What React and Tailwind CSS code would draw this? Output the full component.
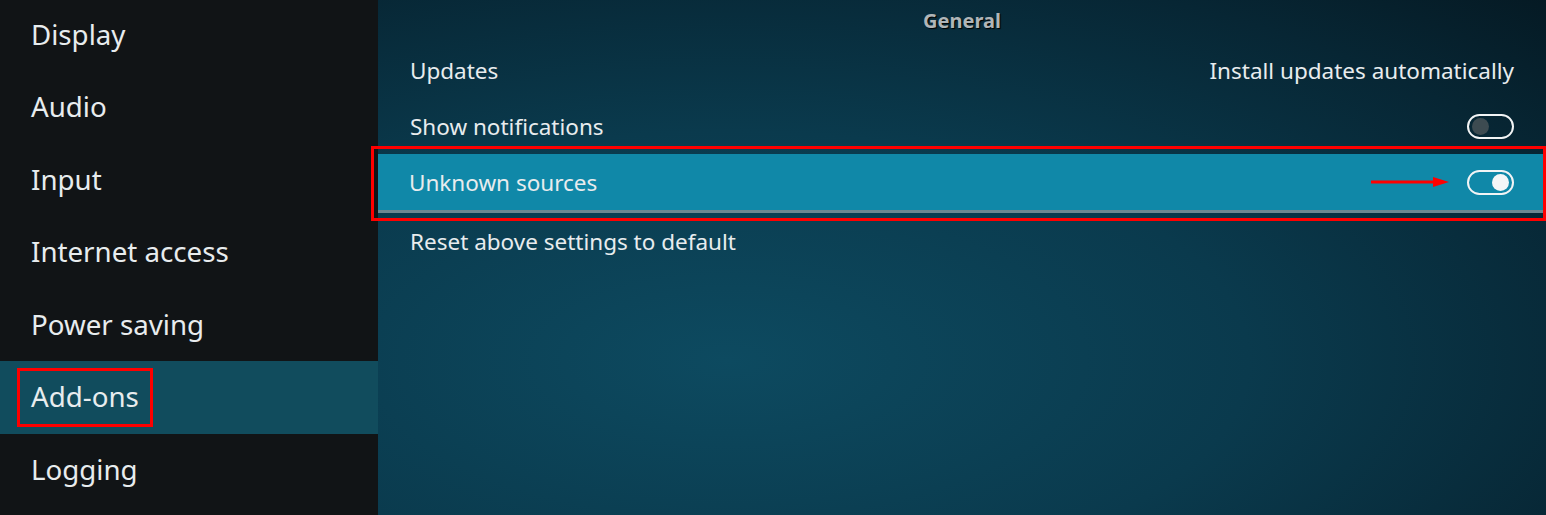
const menu = ["Display", "Audio", "Input", "Internet access", "Power saving", "Add-ons", "Logging"]

const Toggle = ({ on }) => (
  <div className="w-[47px] h-[25px] rounded-full border-2 border-[#f2f4f5] flex items-center px-[3px]">
    {on ? (
      <div className="ml-auto w-[17px] h-[17px] rounded-full bg-[#f4f6f7]" />
    ) : (
      <div className="w-[17px] h-[17px] rounded-full bg-[#3d4b51]" />
    )}
  </div>
)

const App = () => {
  return (
    <div
      className="flex w-[1546px] h-[515px] overflow-hidden text-[#e8ecee]"
      style={{ fontFamily: '"Noto Sans", "Open Sans", sans-serif' }}
    >
      <div className="w-[378px] shrink-0 bg-[#111416] flex flex-col pt-[0px] -mt-[1.5px]">
        {menu.map((item) => (
          <div
            key={item}
            className={`h-[72.5px] shrink-0 flex items-center pl-[31px] text-[27.7px] ${item === "Add-ons" ? "bg-[#114c5d]" : ""}`}
          >
            {item === "Add-ons" ? (
              <span className="relative">
                {item}
                <span className="absolute -left-[14px] -right-[14px] -top-[8px] -bottom-[9px] border-[3px] border-[#ff0000]" />
              </span>
            ) : (
              item
            )}
          </div>
        ))}
      </div>

      <div className="flex-1 flex flex-col bg-[radial-gradient(ellipse_at_30%_70%,#0d4a60_0%,#0a3a4d_45%,#072634_80%,#051a24_100%)]">
        <div className="h-[42px] flex items-center justify-center text-[20px] font-bold text-[#b0b5b8] [text-shadow:1px_1px_1px_#000]">
          General
        </div>
        <div className="h-[56px] flex items-center justify-between pl-[32px] pr-[32px] pt-[2px] text-[22.5px]">
          <span>Updates</span>
          <span>Install updates automatically</span>
        </div>
        <div className="h-[56px] flex items-center justify-between pl-[32px] pr-[32px] text-[22.5px]">
          <span className="pt-[2px]">Show notifications</span>
          <Toggle on={false} />
        </div>
        <div className="relative mr-[3px]">
          <div className="h-[59px] flex items-center justify-between pl-[31px] pr-[29px] text-[22.5px] bg-[#1088a8] border-b-[3px] border-[#6c8791]">
            <span className="pt-[2px]">Unknown sources</span>
            <div className="flex items-center gap-[16px]">
              <svg width="80" height="12" viewBox="0 0 80 12">
                <line x1="0" y1="6" x2="64" y2="6" stroke="#ff0000" strokeWidth="3" />
                <polygon points="62,1 78,6 62,11" fill="#ff0000" />
              </svg>
              <Toggle on />
            </div>
          </div>
          <div className="absolute -left-[7px] -right-[3px] -top-[8px] -bottom-[8px] border-[3px] border-[#ff0000]" />
        </div>
        <div className="h-[58px] flex items-center pl-[32px] text-[22.5px]">
          <span>Reset above settings to default</span>
        </div>
      </div>
    </div>
  )
}

export default App
